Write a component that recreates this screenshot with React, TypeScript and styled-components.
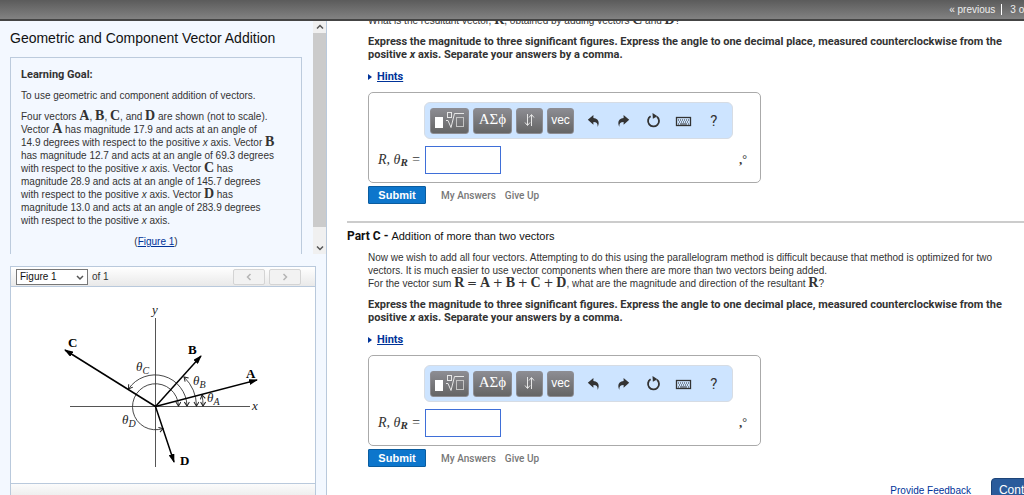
import React from 'react';
import styled, { createGlobalStyle } from 'styled-components';

const GlobalStyle = createGlobalStyle`
  * { box-sizing: border-box; }
  html, body { margin: 0; padding: 0; }
  body {
    background: #fff;
    color: #333;
    font: 10px/13px "Liberation Sans", Arial, sans-serif;
    overflow: hidden;
  }
  a { color: #039; }
  p, h1, h2, h3 { margin: 0; font-size: inherit; }
  button, input, select { font-family: inherit; margin: 0; }
`;

const Page = styled.div`
  display: flex;
  flex-direction: column;
  height: 100vh;
  overflow: hidden;
`;

const TopBar = styled.header`
  flex: none;
  height: 21px;
  display: flex;
  justify-content: flex-end;
  overflow: hidden;
  background: linear-gradient(#5b5b5b, #828282);
  border-bottom: 2px solid #444;
`;

const Pager = styled.nav`
  display: flex;
  align-items: center;
  gap: 8px;
  margin-right: -3px;
  color: #eee;
  white-space: nowrap;
`;

const PagerLink = styled.a`
  color: #eee;
  text-decoration: none;
  padding-right: 6px;
  border-right: 1px solid #fff;
  line-height: 11px;
`;

const Columns = styled.div`
  flex: 1;
  min-height: 0;
  display: flex;
`;

const Sidebar = styled.aside`
  flex: 0 0 327px;
  min-width: 0;
  display: flex;
  flex-direction: column;
  gap: 12px;
  background: #f3f8ff;
  border-right: 1px solid #b9c9dc;
`;

const Intro = styled.div`
  flex: 1;
  min-height: 0;
  display: flex;
`;

const IntroBody = styled.div`
  flex: 1;
  min-width: 0;
  padding: 9px 11px 0 10px;
  overflow: hidden;
`;

const Title = styled.h1`
  color: #111;
  font-weight: 400;
  font-size: 14px;
  line-height: 17px;
  margin-bottom: 10px;
`;

const GoalBox = styled.section`
  height: 100%;
  padding: 10px 10px 0;
  border: 1px solid #bccbdd;
  display: flex;
  flex-direction: column;
  gap: 8px;
  white-space: nowrap;
`;

const Strong = styled.b`
  font-family: Roboto, sans-serif;
  font-size: 11px;
`;

const Centered = styled.p`
  text-align: center;
`;

const Track = styled.div`
  flex: 0 0 13px;
  display: flex;
  flex-direction: column;
  background: #f0f0f0;
`;

const TrackButton = styled.button`
  height: 12px;
  padding: 0;
  border: 0;
  background: #f0f0f0;
  display: grid;
  place-items: center;
`;

const Thumb = styled.div`
  height: 194px;
  margin-bottom: auto;
  background: #cbcbcb;
`;

const Figure = styled.section`
  flex: none;
  margin: 0 10px;
  border: 1px solid #b9c9dc;
  border-bottom: 0;
  background: #fff;
`;

const FigureBar = styled.div`
  height: 20px;
  display: flex;
  align-items: center;
  padding: 0 14px 0 5px;
  gap: 4px;
  background: linear-gradient(#fff, #e9e9e9);
  border-bottom: 1px solid #b9c9dc;
`;

const FigureSelect = styled.div`
  position: relative;
  display: flex;
  select {
    appearance: none;
    width: 72px;
    height: 16px;
    padding: 0 3px;
    border: 1px solid #777;
    border-radius: 0;
    background: #fff;
    color: #111;
    font-size: 10px;
    line-height: 14px;
  }
  svg {
    position: absolute;
    right: 4px;
    top: 6px;
    pointer-events: none;
  }
`;

const Step = styled.button`
  width: 32px;
  height: 16px;
  padding: 0;
  display: grid;
  place-items: center;
  border: 1px solid #d4d4d4;
  border-radius: 2px;
  background: #f2f2f2;
`;

const FigureCount = styled.span`
  margin-right: auto;
`;

const Diagram = styled.svg`
  display: block;
  width: 100%;
  height: 196px;
`;

const FigureFoot = styled.div`
  height: 12px;
  border-top: 1px solid #b9c9dc;
  background: linear-gradient(#fbfbfb, #efefef);
`;

const Main = styled.main`
  flex: 1;
  min-width: 0;
  overflow: hidden;
  white-space: nowrap;
`;

const Part = styled.section`
  margin-left: 20px;
`;

const Block = styled.div`
  margin-left: 21px;
  display: flex;
  flex-direction: column;
  gap: 8px;
`;

const ScrolledBlock = styled(Block)`
  margin-top: -7px;
`;

const Instruction = styled.p`
  font-family: Roboto, sans-serif;
  font-size: 11px;
  font-weight: 700;
`;

const PartTitle = styled.h2`
  color: #111;
  border-top: 2px solid #ccc;
  font-family: Roboto, sans-serif;
  font-size: 12px;
  line-height: 16px;
  font-weight: 700;
  margin: 17px 0 7px;
  padding-top: 5px;
  span {
    font-family: "Liberation Sans", Arial, sans-serif;
    font-size: 11px;
    font-weight: 400;
  }
`;

const Vec = styled.b`
  font-family: "Liberation Serif", serif;
  font-size: 14px;
  line-height: 0;
`;

const MathSign = styled.span`
  font-family: "DejaVu Sans", sans-serif;
  font-size: 12px;
  line-height: 0;
`;

const HintsLine = styled.div`
  display: flex;
  align-items: center;
  gap: 5px;
  padding: 1px 0;
`;

const AnswerBox = styled.div`
  width: 393px;
  padding: 9px 13px 8px 9px;
  border: 1px solid #aaa;
  border-radius: 5px;
`;

const Toolbar = styled.div`
  width: 309px;
  height: 37px;
  margin-left: 46px;
  padding: 0 3px 0 5px;
  display: flex;
  align-items: center;
  gap: 4px;
  border: 1px solid #d6dce4;
  border-radius: 6px;
  background: #cde4ff;
`;

const Tool = styled.button<{ $w: number; $serif?: boolean }>`
  width: ${p => p.$w}px;
  height: 26px;
  padding: 0 0 2px;
  display: grid;
  place-items: center;
  border: 1px solid #8d8d93;
  border-radius: 3px;
  background: linear-gradient(#8c8c92, #656565);
  color: #fff;
  font-size: ${p => (p.$serif ? 15 : 12)}px;
  font-family: ${p => (p.$serif ? '"Liberation Serif", serif' : 'inherit')};
`;

const IconTools = styled.div`
  flex: 1;
  display: flex;
`;

const IconTool = styled.button`
  flex: 1;
  height: 26px;
  padding: 0;
  border: 0;
  background: none;
  color: #333;
  font-family: Roboto, sans-serif;
  font-size: 15px;
  display: grid;
  place-items: center;
`;

const AnswerRow = styled.div`
  display: flex;
  align-items: center;
  margin-top: 7px;
`;

const AnswerLabel = styled.label`
  width: 47px;
  font: italic 14px/16px "Liberation Serif", serif;
  sub {
    font-size: 11px;
    line-height: 0;
    vertical-align: -2px;
    font-weight: 700;
  }
`;

const AnswerInput = styled.input`
  width: 76px;
  height: 28px;
  padding: 2px 4px;
  border: 1px solid #3f6fd8;
  background: #fff;
`;

const Units = styled.span`
  margin-left: auto;
  font: 700 13px/16px "Liberation Serif", serif;
  sup {
    font-size: 12px;
    font-weight: 400;
    line-height: 0;
    vertical-align: 1px;
  }
`;

const Actions = styled.div`
  display: flex;
  align-items: center;
  gap: 9px;
  margin-top: -5px;
`;

const Submit = styled.button`
  width: 58px;
  height: 18px;
  margin-right: 6px;
  padding: 0;
  border: 1px solid #0a5c9f;
  border-radius: 1px;
  background: #0d76cc;
  color: #fff;
  font-size: 11px;
  line-height: 14px;
  font-weight: 700;
`;

const Muted = styled.a`
  color: #777;
  text-decoration: none;
  font-family: Roboto, sans-serif;
  font-weight: 500;
`;

const PageActions = styled.footer`
  display: flex;
  justify-content: flex-end;
  align-items: center;
  gap: 20px;
  margin: 11px -31px 0 0;
`;

const Continue = styled.button`
  height: 24px;
  padding: 0 7px;
  border: 1px solid #1d4478;
  border-radius: 4px;
  background: #2a5b9b;
  color: #fff;
  font-size: 12px;
`;

const Chevron = ({ d, w, h, color }: { d: string; w: number; h: number; color: string }) => (
  <svg width={w} height={h} viewBox={`0 0 ${w} ${h}`} fill="none" stroke={color} strokeWidth="1.5" aria-hidden="true">
    <path d={d} />
  </svg>
);

const RootIcon = () => (
  <svg width="31" height="18" viewBox="0 0 31 18" fill="none" stroke="#e6e6e6" aria-hidden="true">
    <rect x="1" y="6" width="8" height="11" fill="#fff" stroke="none" />
    <path d="M12 9.5h2l3 7L20.500 2.500H30" />
    <rect x="13.500" y="1.500" width="4" height="5" />
    <rect x="22.500" y="6.500" width="7" height="9" stroke="#c4c4c4" />
  </svg>
);

const SwapIcon = () => (
  <svg width="11" height="14" viewBox="0 0 11 14" fill="none" stroke="#e6e6e6" aria-hidden="true">
    <path d="M3.500 1v11M1 9.500l2.500 3L6 9.500M7.500 13V2M5 4.500l2.500-3 2.500 3" />
  </svg>
);

const UndoIcon = ({ flip }: { flip?: boolean }) => (
  <svg width="13" height="14" viewBox="0 0 13 14" fill="currentColor" aria-hidden="true">
    <path
      transform={flip ? 'translate(13 0) scale(-1 1)' : undefined}
      d="M.8 5.800L6.400 1v2.900c4.600.3 6.700 4 4.300 9 .1-3.400-1-4.800-4.300-4.900v2.800z"
    />
  </svg>
);

const ResetIcon = () => (
  <svg width="15" height="15" viewBox="0 0 15 15" fill="none" stroke="currentColor" strokeWidth="1.800" aria-hidden="true">
    <path d="M4.600 3.300A5.500 5.500 0 1 0 11 3.700" />
    <path d="M6.500 0l5 3.300-4.600 2.500z" fill="currentColor" stroke="none" />
  </svg>
);

const KeyboardIcon = () => (
  <svg width="17" height="14" viewBox="0 0 17 14" fill="none" stroke="currentColor" aria-hidden="true">
    <rect x="1.500" y="3.500" width="14" height="8" strokeWidth="1.300" />
    <path d="M3 6h11M4 8h10" strokeDasharray="1 1" />
    <path d="M3 10h1M5 10h7M13 10h1" />
  </svg>
);

const Answer = ({ id }: { id: string }) => (
  <>
    <AnswerBox>
      <Toolbar role="toolbar" aria-label="Equation tools">
        <Tool type="button" $w={39} aria-label="Templates"><RootIcon /></Tool>
        <Tool type="button" $w={39} $serif>ΑΣϕ</Tool>
        <Tool type="button" $w={27} aria-label="Subscript and superscript"><SwapIcon /></Tool>
        <Tool type="button" $w={27}>vec</Tool>
        <IconTools>
          <IconTool type="button" aria-label="Undo"><UndoIcon /></IconTool>
          <IconTool type="button" aria-label="Redo"><UndoIcon flip /></IconTool>
          <IconTool type="button" aria-label="Reset"><ResetIcon /></IconTool>
          <IconTool type="button" aria-label="Keyboard"><KeyboardIcon /></IconTool>
          <IconTool type="button">?</IconTool>
        </IconTools>
      </Toolbar>
      <AnswerRow>
        <AnswerLabel htmlFor={id}>R, θ<sub>R</sub> =</AnswerLabel>
        <AnswerInput id={id} type="text" />
        <Units>,<sup>°</sup></Units>
      </AnswerRow>
    </AnswerBox>
    <Actions>
      <Submit type="button">Submit</Submit>
      <Muted href="#answers">My Answers</Muted>
      <Muted href="#giveup">Give Up</Muted>
    </Actions>
  </>
);

const Instructions = () => (
  <>
    <Instruction>
      Express the magnitude to three significant figures. Express the angle to one decimal place, measured counterclockwise from the<br />
      positive <i>x</i> axis. Separate your answers by a comma.
    </Instruction>
    <HintsLine>
      <svg width="4" height="6" viewBox="0 0 4 6" fill="#039" aria-hidden="true"><path d="M0 0l4 3-4 3z" /></svg>
      <a href="#hints"><Strong>Hints</Strong></a>
    </HintsLine>
  </>
);

const VectorDiagram = () => (
  <Diagram viewBox="11 287 304 196" role="img" aria-label="Vectors A, B, C and D" fontFamily='"Liberation Serif", serif'>
    <defs>
      <marker id="tip" viewBox="0 0 9 6" refX="8" refY="3" markerWidth="9" markerHeight="6" markerUnits="userSpaceOnUse" orient="auto">
        <path d="M0 0l9 3-9 3z" fill="#000" />
      </marker>
      <marker id="open" viewBox="0 0 6 6" refX="5" refY="3" markerWidth="6" markerHeight="6" markerUnits="userSpaceOnUse" orient="auto-start-reverse">
        <path d="M1 .5L5 3 1 5.500" fill="none" stroke="#222" />
      </marker>
    </defs>
    <path d="M155.500 318V467M70 406.500H250" stroke="#555" fill="none" />
    <g fill="none" stroke="#333" strokeWidth=".9">
      <path d="M178.500 406A23 23 0 1 0 163 428.500" markerStart="url(#open)" markerEnd="url(#open)" />
      <path d="M187 406A32 32 0 0 0 128.500 389" markerStart="url(#open)" markerEnd="url(#open)" />
      <path d="M196.500 406A41 41 0 0 0 184 377" markerStart="url(#open)" markerEnd="url(#open)" />
      <path d="M203 406A47 47 0 0 0 202 395" markerStart="url(#open)" markerEnd="url(#open)" />
    </g>
    <g stroke="#000" strokeWidth="1.500">
      <path d="M155.500 406.500L257 380" markerEnd="url(#tip)" />
      <path d="M155.500 406.500L201 356" markerEnd="url(#tip)" />
      <path d="M155.500 406.500L65 350" markerEnd="url(#tip)" />
      <path d="M155.500 406.500L174 462" markerEnd="url(#tip)" />
    </g>
    <g fontSize="13" fontWeight="700" fill="#000">
      <text x="246" y="378">A</text>
      <text x="188" y="354">B</text>
      <text x="68" y="347">C</text>
      <text x="180" y="465">D</text>
    </g>
    <g fontSize="13" fontStyle="italic" fill="#222">
      <text x="152" y="314">y</text>
      <text x="252" y="410">x</text>
      <text x="136" y="371">θ<tspan fontSize="10" dy="3">C</tspan></text>
      <text x="193" y="385">θ<tspan fontSize="10" dy="3">B</tspan></text>
      <text x="207" y="402">θ<tspan fontSize="10" dy="3">A</tspan></text>
      <text x="122" y="424">θ<tspan fontSize="10" dy="3">D</tspan></text>
    </g>
  </Diagram>
);

export default function App() {
  return (
    <Page>
      <GlobalStyle />
      <TopBar>
        <Pager>
          <PagerLink href="#previous">« previous</PagerLink>
          <span>3 of</span>
        </Pager>
      </TopBar>
      <Columns>
        <Sidebar>
          <Intro>
            <IntroBody>
              <Title>Geometric and Component Vector Addition</Title>
              <GoalBox>
                <p><Strong>Learning Goal:</Strong></p>
                <p>To use geometric and component addition of vectors.</p>
                <p>
                  Four vectors <Vec>A</Vec>, <Vec>B</Vec>, <Vec>C</Vec>, and <Vec>D</Vec> are shown (not to scale).<br />
                  Vector <Vec>A</Vec> has magnitude 17.9 and acts at an angle of<br />
                  14.9 degrees with respect to the positive <i>x</i> axis. Vector <Vec>B</Vec><br />
                  has magnitude 12.7 and acts at an angle of 69.3 degrees<br />
                  with respect to the positive <i>x</i> axis. Vector <Vec>C</Vec> has<br />
                  magnitude 28.9 and acts at an angle of 145.7 degrees<br />
                  with respect to the positive <i>x</i> axis. Vector <Vec>D</Vec> has<br />
                  magnitude 13.0 and acts at an angle of 283.9 degrees<br />
                  with respect to the positive <i>x</i> axis.
                </p>
                <Centered>(<a href="#figure">Figure 1</a>)</Centered>
              </GoalBox>
            </IntroBody>
            <Track>
              <TrackButton type="button" aria-label="Scroll up"><Chevron d="M1 4.500l3-3 3 3" w={8} h={6} color="#555" /></TrackButton>
              <Thumb />
              <TrackButton type="button" aria-label="Scroll down"><Chevron d="M1 1.500l3 3 3-3" w={8} h={6} color="#555" /></TrackButton>
            </Track>
          </Intro>
          <Figure id="figure">
            <FigureBar>
              <FigureSelect>
                <select aria-label="Figure"><option>Figure 1</option></select>
                <Chevron d="M1 1l3 3 3-3" w={8} h={6} color="#555" />
              </FigureSelect>
              <FigureCount>of 1</FigureCount>
              <Step type="button" aria-label="Previous figure"><Chevron d="M4.500 1l-3 3 3 3" w={6} h={8} color="#b5b5b5" /></Step>
              <Step type="button" aria-label="Next figure"><Chevron d="M1.500 1l3 3-3 3" w={6} h={8} color="#b5b5b5" /></Step>
            </FigureBar>
            <VectorDiagram />
            <FigureFoot />
          </Figure>
        </Sidebar>
        <Main>
          <Part>
            <ScrolledBlock>
              <p>What is the resultant vector, <Vec>R</Vec>, obtained by adding vectors <Vec>C</Vec> and <Vec>D</Vec>?</p>
              <Instructions />
              <Answer id="answer-b" />
            </ScrolledBlock>
          </Part>
          <Part>
            <PartTitle>Part C - <span>Addition of more than two vectors</span></PartTitle>
            <Block>
              <p>
                Now we wish to add all four vectors. Attempting to do this using the parallelogram method is difficult because that method is optimized for two<br />
                vectors. It is much easier to use vector components when there are more than two vectors being added.<br />
                For the vector sum <Vec>R</Vec> <MathSign>=</MathSign> <Vec>A</Vec> <MathSign>+</MathSign> <Vec>B</Vec> <MathSign>+</MathSign> <Vec>C</Vec> <MathSign>+</MathSign> <Vec>D</Vec>, what are the magnitude and direction of the resultant <Vec>R</Vec>?
              </p>
              <Instructions />
              <Answer id="answer-c" />
            </Block>
          </Part>
          <PageActions>
            <a href="#feedback">Provide Feedback</a>
            <Continue type="button">Continue</Continue>
          </PageActions>
        </Main>
      </Columns>
    </Page>
  );
}
